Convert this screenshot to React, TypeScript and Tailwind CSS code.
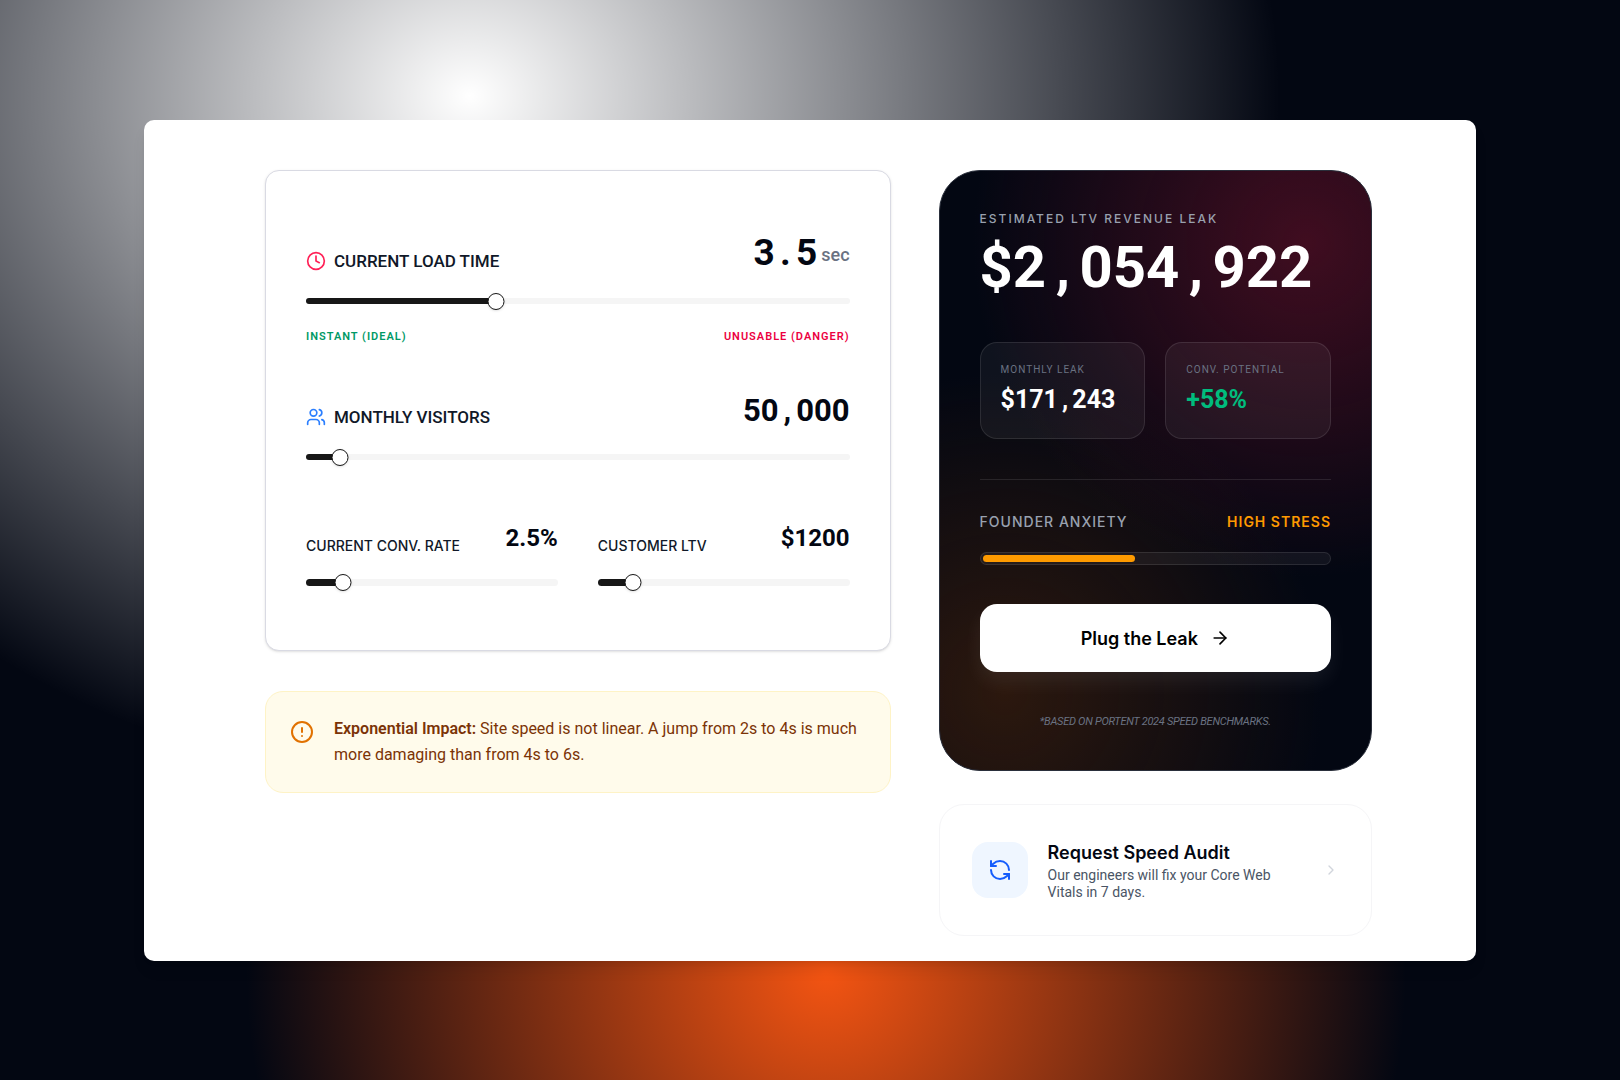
import { ArrowRight, ChevronRight, CircleAlert, Clock, RefreshCcw, Users } from "lucide-react";
import { useState } from "react";
import type { ReactNode } from "react";

type SliderProps = {
  id: string;
  min: number;
  max: number;
  step: number;
  value: number;
  thick?: boolean;
  onChange: (value: number) => void;
};

function Slider({ id, min, max, step, value, thick, onChange }: SliderProps) {
  const fill = 1.5 + ((value - min) / (max - min)) * 97;
  return (
    <div className="relative flex h-4 items-center">
      <div className={`w-full overflow-hidden rounded-full bg-[#f5f5f5] ${thick ? "h-[7px]" : "h-1.5"}`}>
        <div className="h-full bg-[#171717]" style={{ width: `${fill}%` }} />
      </div>
      <div
        className="pointer-events-none absolute size-[17px] -translate-x-1/2 rounded-full border border-[#171717] bg-white shadow-sm"
        style={{ left: `${fill}%` }}
      />
      <input
        id={id}
        type="range"
        min={min}
        max={max}
        step={step}
        value={value}
        onChange={(e) => onChange(Number(e.target.value))}
        className="absolute inset-0 w-full cursor-pointer opacity-0"
      />
    </div>
  );
}

/* A figure whose separators take a full digit cell. */
function Figure({ text }: { text: string }) {
  return (
    <span className="whitespace-nowrap">
      {text.split(/([.,])/).map((part, i) =>
        part === "." || part === "," ? (
          <span key={i} className="inline-block w-[1ch] text-center">{part}</span>
        ) : (
          part
        ),
      )}
    </span>
  );
}

function Stat({ label, children }: { label: string; children: ReactNode }) {
  return (
    <div className="rounded-[17px] border border-white/10 bg-white/5 px-5 pt-5 pb-6">
      <div className="text-[10px] leading-[14px] tracking-[1px] text-[#6a7282]">{label}</div>
      <div className="mt-[9px] text-[25px] leading-7 font-bold">{children}</div>
    </div>
  );
}

export default function App() {
  const [load, setLoad] = useState(3.5);
  const [visitors, setVisitors] = useState(50000);
  const [rate, setRate] = useState(2.5);
  const [ltv, setLtv] = useState(1200);

  return (
    <div className="flex min-h-screen flex-col bg-[#030712] bg-[radial-gradient(810px_692px_at_29%_96px,#ffffff_0%,transparent_100%),radial-gradient(circle_580px_at_51%_90%,#f35412_0%,transparent_100%)] px-36 pt-[120px] pb-[119px] font-['Roboto',sans-serif]">
      <main className="flex flex-1 items-start gap-12 rounded-[10px] bg-white pt-[50px] pr-[104px] pb-[23px] pl-[121px] shadow-lg">
        <div className="min-w-0 flex-[625]">
          <section className="rounded-[14px] border border-[#d9dae3] bg-white px-10 pt-[62px] pb-[60px] text-[#101828] shadow-sm">
            <div className="flex items-end justify-between">
              <label htmlFor="load" className="flex items-center gap-2 text-[17px] leading-6 font-medium">
                <Clock className="size-5 text-[#ff2056]" />
                CURRENT LOAD TIME
              </label>
              <div className="flex items-center gap-1 text-[#030712]">
                <span className="text-[37px] leading-10 font-bold"><Figure text={load.toFixed(1)} /></span>
                <span className="mt-1 text-[18px] leading-6 font-medium text-[#6a7282]">sec</span>
              </div>
            </div>
            <div className="mt-5">
              <Slider id="load" min={0.5} max={9.2} step={0.1} value={load} onChange={setLoad} />
            </div>
            <div className="mt-5 flex justify-between text-[11px] leading-4 font-semibold tracking-[1px]">
              <span className="text-[#009966]">INSTANT (IDEAL)</span>
              <span className="text-[#ec003f]">UNUSABLE (DANGER)</span>
            </div>

            <div className="mt-12 flex items-end justify-between">
              <label htmlFor="visitors" className="flex items-center gap-2 text-[17px] leading-6 font-medium">
                <Users className="size-5 text-[#2b7fff]" />
                MONTHLY VISITORS
              </label>
              <span className="text-[31px] leading-9 font-bold text-[#030712]"><Figure text={visitors.toLocaleString("en-US")} /></span>
            </div>
            <div className="mt-5">
              <Slider id="visitors" min={1000} max={1000000} step={1000} value={visitors} onChange={setVisitors} />
            </div>

            <div className="mt-14 grid grid-cols-2 gap-10">
              <div>
                <div className="flex items-end justify-between">
                  <label htmlFor="rate" className="font-['Inter',sans-serif] text-[14px] leading-5 font-medium">CURRENT CONV. RATE</label>
                  <span className="text-[24px] leading-[35px] font-bold text-[#030712]">{rate}%</span>
                </div>
                <div className="mt-[18px]">
                  <Slider id="rate" min={0.5} max={15} step={0.1} value={rate} thick onChange={setRate} />
                </div>
              </div>
              <div>
                <div className="flex items-end justify-between">
                  <label htmlFor="ltv" className="font-['Inter',sans-serif] text-[14px] leading-5 font-medium">CUSTOMER LTV</label>
                  <span className="text-[24px] leading-[35px] font-bold text-[#030712]">${ltv}</span>
                </div>
                <div className="mt-[18px]">
                  <Slider id="ltv" min={50} max={9000} step={50} value={ltv} thick onChange={setLtv} />
                </div>
              </div>
            </div>
          </section>

          <aside className="mt-10 flex gap-5 rounded-[18px] border border-[#fef3c6] bg-[#fffbeb] py-6 pr-4 pl-6 text-[#7b3306]">
            <CircleAlert className="mt-1 size-6 shrink-0 text-[#e17100]" />
            <p className="text-[16px] leading-[26px]">
              <strong className="font-semibold">Exponential Impact:</strong> Site speed is not linear. A jump from 2s to 4s is much more damaging than from 4s to 6s.
            </p>
          </aside>
        </div>

        <div className="min-w-0 flex-[433]">
          <section className="rounded-[41px] border border-[#2a2f3b] bg-[#030712] bg-[radial-gradient(circle_at_85%_12%,#400d20_0%,transparent_52%),radial-gradient(circle_at_15%_87%,#2c180e_0%,transparent_50%)] px-10 py-10 text-white">
            <div className="font-['Inter',sans-serif] text-[12px] leading-4 font-medium tracking-[2px] text-[#99a1af]">ESTIMATED LTV REVENUE LEAK</div>
            <div className="mt-1 text-[58px] leading-[72px] font-bold"><Figure text="$2,054,922" /></div>
            <div className="mt-[39px] grid grid-cols-2 gap-5">
              <Stat label="MONTHLY LEAK"><Figure text="$171,243" /></Stat>
              <Stat label="CONV. POTENTIAL">
                <span className="text-[#00bc7d]">+58%</span>
              </Stat>
            </div>
            <div className="mt-10 border-t border-white/10 pt-8">
              <div className="flex justify-between font-['Inter',sans-serif] text-[14px] leading-5 font-semibold tracking-[1px]">
                <span className="font-medium text-[#99a1af]">FOUNDER ANXIETY</span>
                <span className="text-[#fe9a00]">HIGH STRESS</span>
              </div>
              <div className="mt-5 h-[13px] rounded-full border border-white/10 bg-white/5 p-[2px]">
                <div className="h-full w-[44%] rounded-full bg-[#fe9a00]" />
              </div>
            </div>
            <button className="mt-[39px] flex h-[68px] w-full items-center justify-center gap-3 rounded-[17px] bg-white font-['Inter',sans-serif] text-[18px] font-semibold text-black shadow-[0_10px_20px_rgba(255,255,255,0.07)]">
              Plug the Leak
              <ArrowRight className="size-5" />
            </button>
            <p className="mt-[42px] text-center text-[11px] leading-4 tracking-tight text-[#6a7282] italic">*BASED ON PORTENT 2024 SPEED BENCHMARKS.</p>
          </section>

          <a href="#audit" className="mt-[33px] flex items-center gap-5 rounded-[25px] border border-[#f5f5f7] bg-white px-8 py-[34px]">
            <span className="flex size-14 shrink-0 items-center justify-center rounded-[16px] bg-[#eff6ff]">
              <RefreshCcw className="size-6 text-[#155dfc]" />
            </span>
            <span className="min-w-0 flex-1">
              <span className="block font-['Inter',sans-serif] text-[18px] leading-7 font-semibold text-[#030712]">Request Speed Audit</span>
              <span className="block max-w-60 text-[14px] leading-[17px] text-[#4a5565]">Our engineers will fix your Core Web Vitals in 7 days.</span>
            </span>
            <ChevronRight className="size-4 text-[#d1d5dc]" />
          </a>
        </div>
      </main>
    </div>
  );
}
